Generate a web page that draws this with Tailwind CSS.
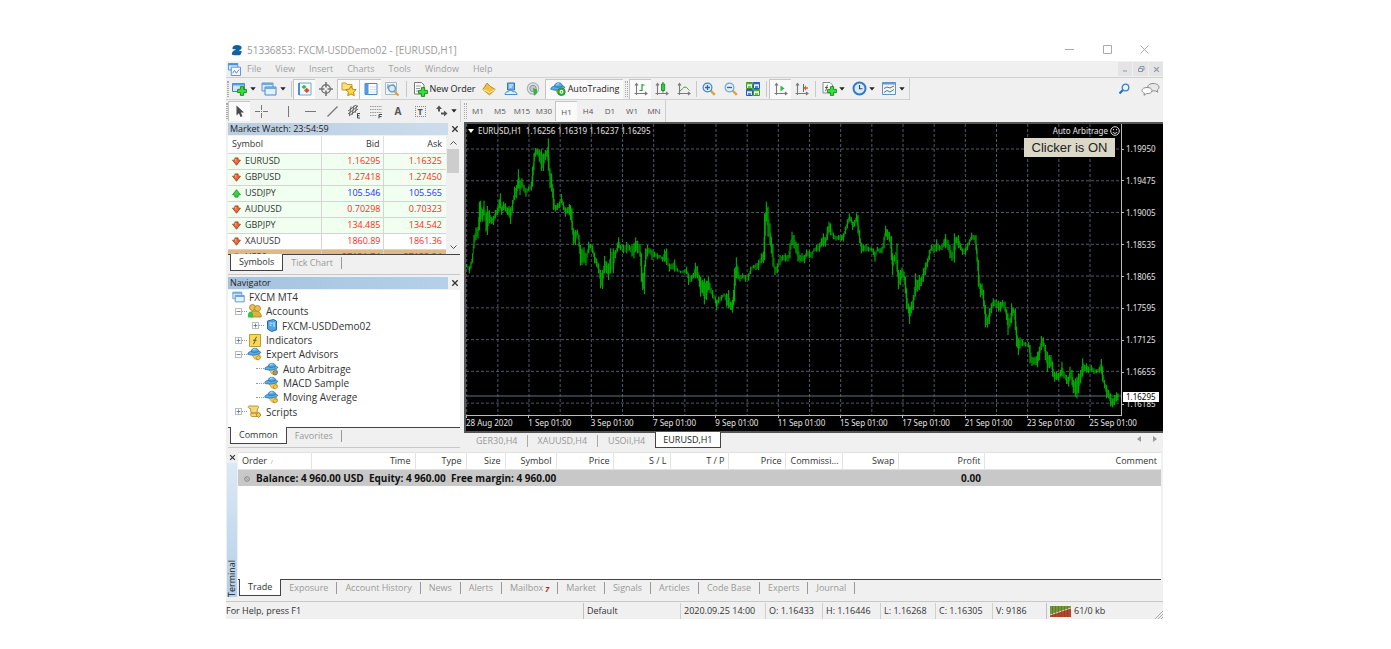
<!DOCTYPE html>
<html lang="en">
<head>
  <meta charset="UTF-8" />
  <meta name="viewport" content="width=device-width, initial-scale=1.0" />
  <title>51336853: FXCM-USDDemo02 - [EURUSD,H1]</title>
  <script src="https://cdn.jsdelivr.net/npm/@tailwindcss/browser@4"></script>
</head>
<body class="bg-white font-['Open_Sans','Noto_Sans',sans-serif] text-[9px] leading-[14px] text-[#333]">

  <!-- Shared icons -->
  <svg class="hidden" xmlns="http://www.w3.org/2000/svg">
    <symbol id="i-plus" viewBox="0 0 10 10"><path d="M3.4 .6h3.2v2.8h2.8v3.2H6.6v2.8H3.4V6.6H.6V3.4h2.8z" fill="#3ddc3d" stroke="#0b8a12" stroke-width=".9"/></symbol>
    <symbol id="i-caret" viewBox="0 0 6 4"><path d="M.3 .3h5.4L3 3.6z" fill="#222"/></symbol>
    <symbol id="i-down" viewBox="0 0 10 10"><path d="M3.2 1h3.6v2.5h2.6L5 9.2.6 3.5h2.6z" fill="#e8653a" stroke="#a8391a" stroke-width=".9"/><path d="M4.2 2v3" stroke="#ffc4a8"/></symbol>
    <symbol id="i-up" viewBox="0 0 10 10"><path d="M3.2 9h3.6V6.5h2.6L5 .8.6 6.5h2.6z" fill="#3fd04a" stroke="#158a22" stroke-width=".9"/></symbol>
    <symbol id="i-x" viewBox="0 0 8 8"><path d="M1.3 1.3l5.4 5.4M6.7 1.3L1.3 6.7" stroke="currentColor" stroke-width="1.3"/></symbol>
    <symbol id="i-advisor" viewBox="0 0 16 14"><path d="M7 6l6 1 1.5 3-3 3.5L8 12 5.5 8z" fill="#f3cf55" stroke="#b98a1e" stroke-width=".7"/><path d="M.8 7.2C1 5 3 4.400 4.400 4.300 4.600 2 6.500.8 8.600.8c2.200 0 3.700 1.400 3.800 3.300 1.300 0 2.300.5 2.300 1.500C11 8.500 5 8.800.8 7.200z" fill="#58aee6" stroke="#226fae" stroke-width=".8"/><path d="M4.500 4.400c2 1.100 5.500.9 7.800-.2" fill="none" stroke="#1f5f9a" stroke-width=".8"/><path d="M6.500 2.700c.8-.8 1.800-1 2.600-.9" stroke="#d5f0ff" fill="none"/></symbol>
    <symbol id="i-dot" viewBox="0 0 6 6"><path d="M3 .4L5.600 3 3 5.600.4 3z" fill="#f2c94a" stroke="#a97e17" stroke-width=".8"/></symbol>
    <symbol id="i-minus-box" viewBox="0 0 9 9"><path d="M.5.5h8v8h-8z" fill="#fff" stroke="#9a9a9a"/><path d="M2 4.500h5" stroke="#3a6ea8"/></symbol>
    <symbol id="i-plus-box" viewBox="0 0 9 9"><path d="M.5.5h8v8h-8z" fill="#fff" stroke="#9a9a9a"/><path d="M2 4.500h5M4.500 2v5" stroke="#3a6ea8"/></symbol>
    <symbol id="i-axes" viewBox="0 0 14 14"><path d="M2.500 13V2M.5 11.500h12M1 3.500L2.500 1.500 4 3.500M11 10l2 1.500-2 1.500" fill="none" stroke="#7b7b7b" stroke-width="1.100"/></symbol>
    <symbol id="i-windows" viewBox="0 0 16 14"><path d="M1 1h11v8H1z" fill="#d9ecfb" stroke="#5a95cf"/><path d="M1 1h11v2H1z" fill="#6aa8e0"/><path d="M4 5h11v8H4z" fill="#e2f1fd" stroke="#4a86c4"/><path d="M4 5h11v2H4z" fill="#6aa8e0"/></symbol>
  </svg>

  <div class="pt-[38px] pr-[228px] pl-[226px]">
    <!-- Title bar -->
    <header class="flex h-[23px] items-center bg-white text-[#9a9a9a]">
      <svg class="ml-[5px] h-3 w-3" viewBox="0 0 12 12"><path d="M1.500 3.800C2 1.800 3.500 1 6 1c2.800 0 4.600 1 4.600 2.800 0 1.500-1.300 2.400-3 3.200h3.200L10 9.700C9.500 11 8.800 11.300 7.500 11.300H3C1.300 11.300.6 10.300.9 9c.5-2 2.800-2.700 4.300-3.700H2.500C1.700 5.300 1.300 4.800 1.500 3.800z" fill="#12609f"/></svg>
      <h1 class="ml-1 text-[10px] leading-4">51336853: FXCM-USDDemo02 - [EURUSD,H1]</h1>
      <div class="ml-auto flex">
        <button aria-label="Minimize" class="flex h-5 w-[38px] items-center justify-center"><svg class="h-[9px] w-[9px]" viewBox="0 0 9 9"><path d="M0 4.500h9" stroke="#aaa"/></svg></button>
        <button aria-label="Maximize" class="flex h-5 w-[38px] items-center justify-center"><svg class="h-[9px] w-[9px]" viewBox="0 0 9 9"><path d="M.5.5h8v8h-8z" fill="none" stroke="#aaa"/></svg></button>
        <button aria-label="Close" class="flex h-5 w-[37px] items-center justify-center"><svg class="h-[9px] w-[9px]" viewBox="0 0 9 9"><path d="M.5.5l8 8M8.500.5l-8 8" stroke="#aaa"/></svg></button>
      </div>
    </header>

    <!-- Menu -->
    <nav class="flex h-[17px] items-center border-b border-[#d0d0d0] bg-[#f0f0f0] text-[#a0a0a0]">
      <svg class="mx-[2px] h-[13px] w-[13px]" viewBox="0 0 14 14"><path d="M.5.5h10v7H.5z" fill="#d9ecfb" stroke="#4a90d6"/><path d="M.5.5h10v2H.5z" fill="#4a90d6"/><path d="M3.500 4.500h10v9h-10z" fill="#f4faff" stroke="#4a90d6"/><path d="M5 11l2-3 2 3 3-4" fill="none" stroke="#6f74d8"/></svg>
      <button class="pr-[7px] pl-1">File</button>
      <button class="px-[7px]">View</button>
      <button class="px-[7px]">Insert</button>
      <button class="px-[7px]">Charts</button>
      <button class="px-[7px]">Tools</button>
      <button class="px-[7px]">Window</button>
      <button class="px-[7px]">Help</button>
      <div class="ml-auto flex gap-px text-[#8a98a6]">
        <button aria-label="Minimize chart" class="flex h-[14px] w-[14px] items-center justify-center bg-[#e4e4e4]"><svg class="h-2 w-2" viewBox="0 0 8 8"><path d="M2 6h4" stroke="currentColor"/></svg></button>
        <button aria-label="Restore chart" class="flex h-[14px] w-[15px] items-center justify-center bg-[#e4e4e4]"><svg class="h-2 w-2" viewBox="0 0 8 8"><path d="M1.500 3.500h4v3h-4zM3 3V1.500h4v3.500H6" fill="none" stroke="currentColor"/></svg></button>
        <button aria-label="Close chart" class="flex h-[14px] w-[14px] items-center justify-center bg-[#e4e4e4]"><svg class="h-[7px] w-[7px]"><use href="#i-x"/></svg></button>
      </div>
    </nav>

    <!-- Standard toolbar -->
    <div class="flex h-[22px] items-stretch bg-[#f0f0f0]">
      <div class="flex items-center border-r border-b border-[#d0d0d0]">
        <span class="mx-px h-4 w-[2px] border-x border-dotted border-[#aaa]"></span>
        <button aria-label="New chart" class="flex w-[30px] items-center gap-[3px] pl-px"><svg class="h-4 w-4" viewBox="0 0 16 16"><path d="M1.500 2.500h12v8h-12z" fill="#cfe6f9" stroke="#3f83c6"/><path d="M1.500 2.500h12v2h-12z" fill="#5a9edb"/><use href="#i-plus" x="6" y="5" width="10" height="10"/></svg><svg class="h-1 w-[6px]"><use href="#i-caret"/></svg></button>
        <button aria-label="Profiles" class="flex w-[30px] items-center gap-[3px] pl-px"><svg class="h-[14px] w-4"><use href="#i-windows"/></svg><svg class="h-1 w-[6px]"><use href="#i-caret"/></svg></button>
        <span class="mx-px h-4 w-px bg-[#c8c8c8]"></span>
        <button aria-label="Market Watch" class="flex h-5 w-[22px] items-center justify-center border-t border-l border-[#c4c4c4] bg-[#fafafa]"><svg class="h-[14px] w-[14px]" viewBox="0 0 14 14"><path d="M1 1h12v12H1z" fill="#f2f9ff" stroke="#6aa8dc"/><path d="M1 1v12" stroke="#4a90d0" stroke-width="2"/><path d="M3.500 5L6 2.800 8.500 5 6 7.200z" fill="#3bbf3b"/><path d="M6 8.500l2.800-2.800 2.800 2.800L8.800 11z" fill="#e1492c"/></svg></button>
        <button aria-label="Data Window" class="flex h-5 w-[22px] items-center justify-center"><svg class="h-[14px] w-[14px]" viewBox="0 0 14 14"><circle cx="7" cy="7" r="4.300" fill="none" stroke="#777" stroke-width="1.400"/><path d="M7 0v5.500M7 8.500V14M0 7h5.500M8.500 7H14" stroke="#777" stroke-width="1.600"/></svg></button>
        <button aria-label="Navigator" class="flex h-5 w-[22px] items-center justify-center border-t border-l border-[#c4c4c4] bg-[#fafafa]"><svg class="h-4 w-4" viewBox="0 0 16 16"><path d="M1 2h4l1 1.500h5V9H1z" fill="#fbe27a" stroke="#c99a2c"/><path d="M10 5l1.600 3.200 3.600.4-2.600 2.500.7 3.600L10 13l-3.300 1.700.7-3.600L4.800 8.600l3.600-.4z" fill="#fbd63c" stroke="#a9821a" stroke-width=".9"/></svg></button>
        <button aria-label="Terminal" class="flex h-5 w-[22px] items-center justify-center border-t border-l border-[#c4c4c4] bg-[#fafafa]"><svg class="h-[14px] w-[14px]" viewBox="0 0 14 14"><path d="M1 1.500h12v11H1z" fill="#fdfeff" stroke="#4a86c4"/><path d="M1 1.500h3.500v11H1z" fill="#4f9ada"/><path d="M6 5h6M6 7.500h6M6 10h6" stroke="#cfe2f2"/></svg></button>
        <button aria-label="Strategy Tester" class="flex h-5 w-[22px] items-center justify-center"><svg class="h-4 w-4" viewBox="0 0 16 16"><path d="M1.500 1.500h11v12h-11z" fill="#eef4fa" stroke="#a5b8ca"/><path d="M3 6h2M4 3v5M9 3v3" stroke="#6f93bb"/><circle cx="8" cy="7.500" r="3.400" fill="#d5ebfb" stroke="#5f94c4" stroke-width="1.200"/><path d="M10.500 10.500l4 4" stroke="#d9a33a" stroke-width="2.200"/></svg></button>
        <span class="mx-[3px] h-4 w-px bg-[#c8c8c8]"></span>
        <button class="flex h-5 w-[68px] items-center justify-center gap-px whitespace-nowrap text-[#222]"><svg class="h-4 w-4 shrink-0" viewBox="0 0 16 16"><path d="M2.500 1.500h7l2.500 2.500v9h-9.500z" fill="#fff" stroke="#777"/><path d="M4 5h5M4 7.500h4M4 10h3" stroke="#999"/><use href="#i-plus" x="6" y="6" width="10" height="10"/></svg>New Order</button>
        <button aria-label="MetaEditor" class="flex h-5 w-[22px] items-center justify-center"><svg class="h-[14px] w-[14px]" viewBox="0 0 14 14"><path d="M.8 7.500L5 1.200l3.500 3.300 4.800 3-5.800 5.300z" fill="#f0c040" stroke="#a8801f" stroke-width=".9"/><path d="M.8 7.500l6.700 3 5.800-3" fill="none" stroke="#fff0b0"/></svg></button>
        <button aria-label="Virtual hosting" class="flex h-5 w-[22px] items-center justify-center"><svg class="h-[14px] w-[14px]" viewBox="0 0 14 14"><path d="M3.500 1h7v7h-7z" fill="#6cb4ea" stroke="#2f78b8"/><path d="M5 3h4M5 5h3" stroke="#e8f6ff"/><path d="M1 12.500c0-2 1.500-3 3-2.800.8-1.700 4-1.700 5 0 2.500-.5 4 .8 4 2.800z" fill="#dcecf8" stroke="#4d8dc4"/></svg></button>
        <button aria-label="Signals" class="flex h-5 w-[22px] items-center justify-center"><svg class="h-[14px] w-[14px]" viewBox="0 0 14 14"><circle cx="7" cy="6.500" r="5.700" fill="#e4e8eb" stroke="#a9b2ba" stroke-width="1.200"/><circle cx="7" cy="6.500" r="3.300" fill="#c0c8ce" stroke="#8c97a1"/><path d="M7 6l4 1.500v2.500c0 2-1.500 3-3 3.700z" fill="#3fae3f"/></svg></button>
        <button class="ml-px flex h-5 w-[78px] items-center justify-center gap-[2px] border-t border-l border-[#c4c4c4] bg-[#fafafa] text-[#222]"><svg class="h-[14px] w-4 shrink-0" viewBox="0 0 16 14"><use href="#i-advisor" width="16" height="14"/><circle cx="11.500" cy="9.800" r="3.800" fill="#2fae36" stroke="#14801d" stroke-width=".6"/><circle cx="11.500" cy="9.800" r="1.400" fill="none" stroke="#fff" stroke-width="1.100"/></svg>AutoTrading</button>
        <span class="mr-px ml-[2px] h-4 w-[3px] border-x border-dotted border-[#aaa]"></span>
        <button aria-label="Bar chart" class="flex h-5 w-[22px] items-center justify-center border-t border-l border-[#c4c4c4] bg-[#fafafa]"><svg class="h-[14px] w-[14px]" viewBox="0 0 14 14"><use href="#i-axes" width="14" height="14"/><path d="M8 2v7M8 3h2.500M8 8.500H5.500" stroke="#269a3b" stroke-width="1.200"/></svg></button>
        <button aria-label="Candlesticks" class="flex h-5 w-[22px] items-center justify-center"><svg class="h-[14px] w-[14px]" viewBox="0 0 14 14"><use href="#i-axes" width="14" height="14"/><path d="M8 0v10.500" stroke="#167f24"/><path d="M6.500 2h3.200v6.500H6.500z" fill="#2fcb45" stroke="#167f24" stroke-width=".8"/></svg></button>
        <button aria-label="Line chart" class="flex h-5 w-[22px] items-center justify-center"><svg class="h-[14px] w-[14px]" viewBox="0 0 14 14"><use href="#i-axes" width="14" height="14"/><path d="M3 9c2-1 3-4 5-4s2.500 2 4.500 3.500" fill="none" stroke="#3d9a4a"/></svg></button>
        <span class="mx-px h-4 w-px bg-[#c8c8c8]"></span>
        <button aria-label="Zoom in" class="flex h-5 w-[22px] items-center justify-center"><svg class="h-[14px] w-[14px]" viewBox="0 0 14 14"><path d="M8.500 8.500l4.300 4.300" stroke="#dba634" stroke-width="2.400"/><circle cx="5.500" cy="5.500" r="4.400" fill="#dff0fd" stroke="#3c86cc" stroke-width="1.200"/><path d="M3 5.500h5M5.500 3v5" stroke="#2468a8" stroke-width="1.300"/></svg></button>
        <button aria-label="Zoom out" class="flex h-5 w-[22px] items-center justify-center"><svg class="h-[14px] w-[14px]" viewBox="0 0 14 14"><path d="M8.500 8.500l4.300 4.300" stroke="#dba634" stroke-width="2.400"/><circle cx="5.500" cy="5.500" r="4.400" fill="#dff0fd" stroke="#6ba4da" stroke-width="1.200"/><path d="M3 5.500h5" stroke="#2468a8" stroke-width="1.300"/></svg></button>
        <button aria-label="Tile windows" class="flex h-5 w-[22px] items-center justify-center"><svg class="h-[14px] w-[14px]" viewBox="0 0 14 14"><path d="M.5.500h6v6h-6zM7.500 7.500h6v6h-6z" fill="#e8fbe0" stroke="#3a9a22"/><path d="M7.500.5h6v6h-6zM.5 7.500h6v6h-6z" fill="#e2edfc" stroke="#2756b8"/><path d="M0 1.500h7M7 8.500h7M2 5h3M9 12h3" stroke="#45b32a" stroke-width="1.600"/><path d="M7 1.500h7M0 8.500h7M9 5h3M2 12h3" stroke="#2f64cc" stroke-width="1.600"/></svg></button>
        <span class="mx-[2px] h-4 w-px bg-[#c8c8c8]"></span>
        <button aria-label="Auto scroll" class="flex h-5 w-[22px] items-center justify-center border-t border-l border-[#c4c4c4] bg-[#fafafa]"><svg class="h-[14px] w-[14px]" viewBox="0 0 14 14"><use href="#i-axes" width="14" height="14"/><path d="M6.500 3.500v6L10.500 6.500z" fill="#2fb845"/></svg></button>
        <button aria-label="Chart shift" class="flex h-5 w-[22px] items-center justify-center"><svg class="h-[14px] w-[14px]" viewBox="0 0 14 14"><use href="#i-axes" width="14" height="14"/><path d="M8.500 2v8" stroke="#44709c"/><path d="M13 6h-3" stroke="#d95a2b" stroke-width="1.400"/><path d="M11 3.500v5L8.500 6z" fill="#d95a2b"/></svg></button>
        <span class="mx-[2px] h-4 w-px bg-[#c8c8c8]"></span>
        <button aria-label="Indicators" class="flex w-[30px] items-center justify-center gap-[2px]"><svg class="h-4 w-4" viewBox="0 0 16 16"><path d="M2 1.500h7l2.500 2.500v8H2z" fill="#fff" stroke="#888"/><path d="M7 4c-2 0-1 6-3 6M4 6.500h3" fill="none" stroke="#555"/><use href="#i-plus" x="6" y="5" width="10" height="10"/></svg><svg class="h-1 w-[6px]"><use href="#i-caret"/></svg></button>
        <button aria-label="Periods" class="flex w-[30px] items-center justify-center gap-[2px]"><svg class="h-[15px] w-[15px]" viewBox="0 0 15 15"><circle cx="7.500" cy="7.500" r="6" fill="#d8ebfa" stroke="#2f7cc4" stroke-width="2"/><path d="M7.500 4v3.800h3" fill="none" stroke="#345" stroke-width="1.100"/></svg><svg class="h-1 w-[6px]"><use href="#i-caret"/></svg></button>
        <button aria-label="Templates" class="flex w-[31px] items-center justify-center gap-[3px]"><svg class="h-[13px] w-[14px]" viewBox="0 0 14 13"><path d="M.5.5h13v12H.5z" fill="#eef6fd" stroke="#5c93c4"/><path d="M.5 1.500h13" stroke="#5b9bd6" stroke-width="2"/><path d="M2 6.500l3-1.500 3 1 4-2" fill="none" stroke="#b5523a"/><path d="M2 10.500l3-2 3 1.500 4-2.500" fill="none" stroke="#3f8f4a"/></svg><svg class="h-1 w-[6px]"><use href="#i-caret"/></svg></button>
      </div>
      <div class="ml-auto flex items-center gap-[11px] pr-[3px]">
        <button aria-label="Search"><svg class="h-3 w-3" viewBox="0 0 12 12"><path d="M5.200 6.800L1.500 10.500" stroke="#2c6fb5" stroke-width="2.200"/><circle cx="7.500" cy="4.500" r="3.300" fill="#e6f2fc" stroke="#3c82c6" stroke-width="1.300"/></svg></button>
        <button aria-label="Chat"><svg class="h-[14px] w-[19px]" viewBox="0 0 19 14"><path d="M12 1.500c3.500 0 6 1.500 6 3.700 0 1.300-.8 2.200-1.700 2.800l.5 2.200-2.600-1.400c-4 .6-7.500-.8-7.500-3.600C6.700 3 9 1.500 12 1.500z" fill="#e8e8e8" stroke="#8c8c8c"/><path d="M6 5.500c3 0 5 1.200 5 3.100 0 2.200-2.500 3.300-5.500 3l-2.500 1.700.4-2.300C2 10.500 1 9.700 1 8.600c0-1.900 2.200-3.100 5-3.100z" fill="#fff" stroke="#8c8c8c"/></svg></button>
      </div>
    </div>

    <!-- Line studies and timeframes -->
    <div class="flex h-[22px] bg-[#f0f0f0] text-[8px] text-[#555]">
      <div class="flex w-[235px] items-center border-r border-[#d0d0d0]">
        <span class="h-4 w-[2px] border-x border-dotted border-[#aaa]"></span>
        <button aria-label="Cursor" class="flex h-5 w-[22px] items-center justify-center border-t border-l border-[#c4c4c4] bg-[#fafafa]"><svg class="h-[13px] w-[10px]" viewBox="0 0 10 13"><path d="M1.500.5v10l2.400-2.300L5.600 12l1.900-.8-1.700-3.700H9z" fill="#4a4a4a"/></svg></button>
        <button aria-label="Crosshair" class="mr-[5px] flex h-5 w-[22px] items-center justify-center"><svg class="h-[13px] w-[13px]" viewBox="0 0 13 13"><path d="M6.500 0v5M6.500 8v5M0 6.500h5M8 6.500h5M6 6.500h1" stroke="#777"/></svg></button>
        <button aria-label="Vertical line" class="flex h-5 w-[22px] items-center justify-center"><svg class="h-[11px] w-[11px]" viewBox="0 0 11 11"><path d="M5.500 0v11" stroke="#777"/></svg></button>
        <button aria-label="Horizontal line" class="flex h-5 w-[22px] items-center justify-center"><svg class="h-[11px] w-[11px]" viewBox="0 0 11 11"><path d="M0 5.500h11" stroke="#777"/></svg></button>
        <button aria-label="Trendline" class="flex h-5 w-[22px] items-center justify-center"><svg class="h-[11px] w-[11px]" viewBox="0 0 11 11"><path d="M.5 10.500l10-10" stroke="#777" stroke-width="1.200"/></svg></button>
        <button aria-label="Equidistant channel" class="flex h-5 w-[22px] items-center justify-center"><svg class="h-[15px] w-[14px]" viewBox="0 0 14 15"><path d="M1 7l8-6M1 10l10-8M2 12l9-7M4 2.500L2.500 11M7 1.500L5 11M10 1L8 9" stroke="#666" fill="none"/><path d="M13 9.500h-2.500v4.500H13M10.500 11.700h2" fill="none" stroke="#444"/></svg></button>
        <button aria-label="Fibonacci retracement" class="flex h-5 w-[22px] items-center justify-center"><svg class="h-[15px] w-[14px]" viewBox="0 0 14 15"><path d="M1 2.500h12M1 5.500h12M1 8.500h12M1 11.500h7" stroke="#999" stroke-dasharray="1.500 .8"/><path d="M10 14.500v-4h3M10 12.500h2.500" fill="none" stroke="#444"/></svg></button>
        <button class="h-5 w-[22px] text-center text-[10px] font-bold text-[#555]">A</button>
        <button class="flex h-5 w-[22px] items-center justify-center"><span class="h-[11px] w-[11px] border border-dotted border-[#888] text-center text-[9px] leading-[10px] font-bold text-[#555]">T</span></button>
        <button aria-label="Arrows" class="flex h-5 w-[29px] items-center justify-center gap-[3px]"><svg class="h-3 w-[13px]" viewBox="0 0 13 12"><path d="M4 .5L7 4H5v2.500H3V4H1z" fill="#555"/><path d="M6 7.500h3V5.500l3.500 3L9 11.500V9.500H6z" fill="#555"/></svg><svg class="h-1 w-[6px]"><use href="#i-caret"/></svg></button>
      </div>
      <div class="ml-px flex items-center border-r border-[#d0d0d0]">
        <span class="ml-[2px] h-4 w-[3px] border-x border-dotted border-[#aaa]"></span>
        <button class="h-5 w-[22px]">M1</button>
        <button class="h-5 w-[22px]">M5</button>
        <button class="h-5 w-[22px]">M15</button>
        <button class="h-5 w-[22px]">M30</button>
        <button class="h-5 w-[22px] border-t border-l border-[#c4c4c4] bg-[#fafafa]">H1</button>
        <button class="h-5 w-[22px]">H4</button>
        <button class="h-5 w-[22px]">D1</button>
        <button class="h-5 w-[22px]">W1</button>
        <button class="h-5 w-[22px]">MN</button>
      </div>
    </div>

    <main class="flex bg-[#f0f0f0]">
      <div class="w-[238px] shrink-0 pr-1 pl-[2px]">
        <!-- Market Watch -->
        <section class="border-b border-[#c8c8c8] pb-[3px]">
          <div class="flex h-[14px] items-center justify-between pr-px">
            <h2 class="h-3 w-[220px] bg-gradient-to-r from-[#b8cde0] to-[#ccdcec] pl-[2px] leading-3 text-[#222]">Market Watch: 23:54:59</h2>
            <button aria-label="Close Market Watch"><svg class="h-2 w-2"><use href="#i-x"/></svg></button>
          </div>
          <div class="flex h-[119px] overflow-hidden border-b border-[#444] bg-white">
            <div class="flex-1">
              <table class="w-full table-fixed border-collapse text-right">
                <thead>
                  <tr class="h-[17px] border-b border-[#d4d4d4]">
                    <th class="w-[93px] border-r border-[#e0e0e0] pl-1 text-left font-normal">Symbol</th>
                    <th class="w-[62px] border-r border-[#e0e0e0] pr-[3px] font-normal">Bid</th>
                    <th class="pr-1 font-normal">Ask</th>
                  </tr>
                </thead>
                <tbody id="quotes"></tbody>
              </table>
            </div>
            <div class="flex w-[14px] flex-col items-center justify-between bg-[#f0f0f0] pt-1 pb-1">
              <svg class="h-[5px] w-[7px]" viewBox="0 0 7 5"><path d="M.5 4.500l3-3 3 3" fill="none" stroke="#555"/></svg>
              <span class="mt-1 mb-auto h-6 w-3 bg-[#cdcdcd]"></span>
              <svg class="h-[5px] w-[7px]" viewBox="0 0 7 5"><path d="M.5.5l3 3 3-3" fill="none" stroke="#555"/></svg>
            </div>
          </div>
          <div class="flex h-4 items-start pl-[2px]">
            <button class="-mt-px h-[17px] border border-t-0 border-[#444] bg-white px-2 leading-4">Symbols</button>
            <button class="my-[2px] h-3 border-r border-[#999] px-2 leading-3 text-[#999]">Tick Chart</button>
          </div>
        </section>

        <!-- Navigator -->
        <section class="border-b border-[#c8c8c8] pt-px pb-[3px]">
          <div class="flex h-[14px] items-center justify-between pr-px">
            <h2 class="h-3 w-[220px] bg-gradient-to-r from-[#a5c3de] to-[#b5d0e8] pl-[2px] leading-3 text-[#222]">Navigator</h2>
            <button aria-label="Close Navigator"><svg class="h-2 w-2"><use href="#i-x"/></svg></button>
          </div>
          <div class="border-b border-[#444] bg-white pb-[8px] text-[10px]">
            <ul class="grid h-[129px] grid-rows-9 pl-1">
              <li class="flex items-center gap-1"><svg class="h-3 w-[13px]"><use href="#i-windows"/></svg>FXCM MT4</li>
              <li class="flex items-center pl-[3px]"><svg class="h-[7px] w-[7px]"><use href="#i-minus-box"/></svg><span class="w-[5px] border-t border-dotted border-[#999]"></span><svg class="mr-1 h-[14px] w-[15px]" viewBox="0 0 15 14"><circle cx="5.500" cy="3.500" r="3" fill="#e9bf52" stroke="#a67c1c" stroke-width=".8"/><circle cx="10.500" cy="4.500" r="3" fill="#e9bf52" stroke="#a67c1c" stroke-width=".8"/><path d="M3 12c0-3 1-5 3.500-5s8 0 7.800 6H4z" fill="#e2b23c" stroke="#a67c1c" stroke-width=".8"/><path d="M1 13.500c-.3-4 .5-6 2.500-6s3 2 2.500 6z" fill="#32c83c"/></svg>Accounts</li>
              <li class="flex items-center pl-[20px]"><svg class="h-[7px] w-[7px]"><use href="#i-plus-box"/></svg><span class="w-[5px] border-t border-dotted border-[#999]"></span><svg class="mr-1 ml-[2px] h-[13px] w-3" viewBox="0 0 12 13"><path d="M1.500 2l6-1.500 3 1.500v9l-5 1.500-4-2.500z" fill="#4fa3e2" stroke="#2568a8"/><path d="M3.500 4l3 .5M3.500 6l2 .5M8 3v5" stroke="#d8eefc"/></svg>FXCM-USDDemo02</li>
              <li class="flex items-center pl-[3px]"><svg class="h-[7px] w-[7px]"><use href="#i-plus-box"/></svg><span class="w-[5px] border-t border-dotted border-[#999]"></span><svg class="mr-1 ml-px h-[13px] w-[14px]" viewBox="0 0 14 13"><path d="M1.500.5h11v12h-11z" fill="#f7d75e" stroke="#c19a2c"/><path d="M9 3c-2.500 0-1.500 7-4 7M5 6.300h3.500" fill="none" stroke="#6b5510"/></svg>Indicators</li>
              <li class="flex items-center pl-[3px]"><svg class="h-[7px] w-[7px]"><use href="#i-minus-box"/></svg><span class="w-[5px] border-t border-dotted border-[#999]"></span><svg class="mr-1 h-[14px] w-[15px]" viewBox="0 0 16 14"><use href="#i-advisor" width="16" height="14"/><use href="#i-dot" x="9" y="8" width="6" height="6"/></svg>Expert Advisors</li>
              <li class="flex items-center pl-[24px]"><span class="w-2 border-t border-dotted border-[#999]"></span><svg class="mr-1 h-[14px] w-[15px]" viewBox="0 0 16 14"><use href="#i-advisor" width="16" height="14"/><circle cx="12" cy="11" r="2.400" fill="#999" stroke="#666" stroke-width=".8"/></svg>Auto Arbitrage</li>
              <li class="flex items-center pl-[24px]"><span class="w-2 border-t border-dotted border-[#999]"></span><svg class="mr-1 h-[14px] w-[15px]" viewBox="0 0 16 14"><use href="#i-advisor" width="16" height="14"/><use href="#i-dot" x="9" y="8" width="6" height="6"/></svg>MACD Sample</li>
              <li class="flex items-center pl-[24px]"><span class="w-2 border-t border-dotted border-[#999]"></span><svg class="mr-1 h-[14px] w-[15px]" viewBox="0 0 16 14"><use href="#i-advisor" width="16" height="14"/><use href="#i-dot" x="9" y="8" width="6" height="6"/></svg>Moving Average</li>
              <li class="flex items-center pl-[3px]"><svg class="h-[7px] w-[7px]"><use href="#i-plus-box"/></svg><span class="w-[5px] border-t border-dotted border-[#999]"></span><svg class="mr-1 h-[13px] w-[15px]" viewBox="0 0 15 13"><path d="M2 1h8.500c1.500 0 1.500 2.500 0 2.500L10 8H4l-.5-4.500C.8 4 .8 1 2 1zM4 8h8c2 0 2 3.500 0 3.500H5C3.500 11.500 3.500 9 4 8z" fill="#f5d778" stroke="#b88f2c" stroke-width=".9"/><use href="#i-dot" x="8.500" y="7" width="6" height="6"/></svg>Scripts</li>
            </ul>
          </div>
          <div class="flex h-4 items-start pl-[2px]">
            <button class="-mt-px h-[17px] border border-t-0 border-[#444] bg-white px-2 leading-4">Common</button>
            <button class="my-[2px] h-3 border-r border-[#999] px-2 leading-3 text-[#999]">Favorites</button>
          </div>
        </section>
      </div>

      <!-- Chart -->
      <section class="flex min-w-0 flex-1 flex-col">
        <div class="relative flex flex-1 flex-col border-t-2 border-b border-l-2 border-[#555] bg-black font-['Noto_Sans','Open_Sans',sans-serif] text-[8px] leading-[10px] text-[#e4e4e4]">
          <div class="flex flex-1">
            <div class="relative flex-1 border-r border-b border-[#bbb]">
              <svg id="plot" class="absolute inset-0 h-full w-full" viewBox="0 0 1965 873" preserveAspectRatio="none"></svg>
            </div>
            <div id="prices" class="relative w-[41px] shrink-0"></div>
          </div>
          <div id="times" class="relative mr-[42px] h-[15px]"></div>
          <div class="absolute inset-x-0 top-[2px] flex items-center justify-between pr-[43px] pl-[2px]">
            <div class="flex items-center gap-1"><svg class="h-1 w-[6px]" viewBox="0 0 6 4"><path d="M0 0h6L3 4z" fill="#fff"/></svg><span class="whitespace-pre">EURUSD,H1  1.16256 1.16319 1.16237 1.16295</span></div>
            <div class="flex items-center gap-[2px]">Auto Arbitrage <svg class="h-[10px] w-[10px]" viewBox="0 0 10 10"><circle cx="5" cy="5" r="4.300" fill="none" stroke="#ddd"/><path d="M3.500 3v1.200M6.500 3v1.200M2.800 6c1 1.800 3.400 1.800 4.400 0" fill="none" stroke="#ddd"/></svg></div>
          </div>
          <button class="absolute top-[14px] right-[48px] h-[19px] w-[91px] bg-[#dcd8c8] font-['Liberation_Sans',Arial,sans-serif] text-[13px] leading-[19px] whitespace-nowrap text-[#222]">Clicker is ON</button>
        </div>
        <div class="flex h-4 shrink-0 items-start border-t border-[#555] text-[#999]">
          <button class="my-[2px] h-3 border-r border-[#aaa] pr-[9px] pl-3 leading-3">GER30,H4</button>
          <button class="my-[2px] h-3 border-r border-[#aaa] px-[10px] leading-3">XAUUSD,H4</button>
          <button class="my-[2px] h-3 px-[10px] leading-3">USOil,H4</button>
          <button class="-mt-px h-4 border border-t-0 border-[#444] bg-white px-[7px] leading-4 text-[#222]">EURUSD,H1</button>
          <div class="mt-[3px] ml-auto flex gap-3 pr-[6px]">
            <button aria-label="Previous tab"><svg class="h-[6px] w-1" viewBox="0 0 4 6"><path d="M4 0v6L0 3z" fill="#999"/></svg></button>
            <button aria-label="Next tab"><svg class="h-[6px] w-1" viewBox="0 0 4 6"><path d="M0 0v6l4-3z" fill="#999"/></svg></button>
          </div>
        </div>
      </section>
    </main>

    <!-- Terminal -->
    <section class="flex border-b border-[#c8c8c8] bg-[#f0f0f0] pt-[4px] pr-[2px] pb-1">
      <div class="flex w-3 shrink-0 flex-col items-center">
        <button aria-label="Close Terminal" class="mb-px flex h-[10px] items-center"><svg class="h-[7px] w-[7px]"><use href="#i-x"/></svg></button>
        <h2 class="w-[10px] flex-1 rotate-180 bg-gradient-to-t from-[#dce9f6] to-[#b4cfe8] text-left leading-[10px] text-[#222] [writing-mode:vertical-rl]">Terminal</h2>
      </div>
      <div class="min-w-0 flex-1">
        <div class="h-[128px] border-b border-[#444] bg-white">
          <table class="w-full table-fixed border-collapse text-right">
            <thead>
              <tr class="h-[17px] border-t border-b border-[#e0e0e0]">
                <th class="w-[73px] border-r border-[#e4e4e4] pl-1 text-left font-normal">Order <span class="text-[6px] text-[#999]">&nbsp;∕</span></th>
                <th class="w-[104px] border-r border-[#e4e4e4] pr-1 font-normal">Time</th>
                <th class="w-[51px] border-r border-[#e4e4e4] pr-1 font-normal">Type</th>
                <th class="w-[39px] border-r border-[#e4e4e4] pr-1 font-normal">Size</th>
                <th class="w-[51px] border-r border-[#e4e4e4] pr-1 font-normal">Symbol</th>
                <th class="w-[57px] border-r border-[#e4e4e4] pr-[3px] font-normal">Price</th>
                <th class="w-[57px] border-r border-[#e4e4e4] pr-[3px] font-normal">S / L</th>
                <th class="w-[58px] border-r border-[#e4e4e4] pr-[3px] font-normal">T / P</th>
                <th class="w-[57px] border-r border-[#e4e4e4] pr-[3px] font-normal">Price</th>
                <th class="w-[57px] border-r border-[#e4e4e4] pr-[3px] font-normal whitespace-nowrap">Commissi...</th>
                <th class="w-[56px] border-r border-[#e4e4e4] pr-[3px] font-normal">Swap</th>
                <th class="w-[86px] border-r border-[#e4e4e4] pr-[3px] font-normal">Profit</th>
                <th class="pr-1 font-normal">Comment</th>
              </tr>
            </thead>
            <tbody>
              <tr class="h-4 bg-[#c8c8c8] text-[10px] font-bold text-[#111]">
                <td colspan="11" class="pl-[6px] text-left whitespace-pre"><svg class="mr-[6px] inline h-[6px] w-[6px] align-middle" viewBox="0 0 6 6"><circle cx="3" cy="3" r="2.300" fill="none" stroke="#888"/><path d="M1 1l4 4" stroke="#888" stroke-width=".7"/></svg>Balance: 4 960.00 USD  Equity: 4 960.00  Free margin: 4 960.00</td>
                <td class="pr-[3px]">0.00</td>
                <td></td>
              </tr>
            </tbody>
          </table>
        </div>
        <div class="flex h-[17px] items-start pl-px text-[#999]">
          <button class="-mt-px h-[17px] border border-t-0 border-[#444] bg-white px-2 leading-4 text-[#333]">Trade</button>
          <button class="my-[2px] h-3 border-r border-[#999] px-2 leading-3">Exposure</button>
          <button class="my-[2px] h-3 border-r border-[#999] px-2 leading-3">Account History</button>
          <button class="my-[2px] h-3 border-r border-[#999] px-2 leading-3">News</button>
          <button class="my-[2px] h-3 border-r border-[#999] px-2 leading-3">Alerts</button>
          <button class="my-[2px] flex h-3 border-r border-[#999] px-2 leading-3">Mailbox<span class="pt-[3px] pl-[2px] text-[7px] leading-[10px] font-bold text-red-600 italic">7</span></button>
          <button class="my-[2px] h-3 border-r border-[#999] px-2 leading-3">Market</button>
          <button class="my-[2px] h-3 border-r border-[#999] px-2 leading-3">Signals</button>
          <button class="my-[2px] h-3 border-r border-[#999] px-2 leading-3">Articles</button>
          <button class="my-[2px] h-3 border-r border-[#999] px-2 leading-3">Code Base</button>
          <button class="my-[2px] h-3 border-r border-[#999] px-2 leading-3">Experts</button>
          <button class="my-[2px] h-3 border-r border-[#999] px-2 leading-3">Journal</button>
        </div>
      </div>
    </section>

    <!-- Status bar -->
    <footer class="relative flex h-[17px] items-end bg-[#f0f0f0] leading-4">
      <span class="flex-1">For Help, press F1</span>
      <span class="w-[97px] border-l border-[#c0c0c0] pl-[3px]">Default</span>
      <span class="w-[85px] border-l border-[#d0d0d0] pl-[3px]">2020.09.25 14:00</span>
      <span class="w-[57px] border-l border-[#d0d0d0] pl-[3px]">O: 1.16433</span>
      <span class="w-[58px] border-l border-[#d0d0d0] pl-[3px]">H: 1.16446</span>
      <span class="w-[55px] border-l border-[#d0d0d0] pl-[3px]">L: 1.16268</span>
      <span class="w-[57px] border-l border-[#d0d0d0] pl-[3px]">C: 1.16305</span>
      <span class="w-[54px] border-l border-[#d0d0d0] pl-[3px]">V: 9186</span>
      <span class="flex w-[117px] items-center gap-[3px] border-l border-[#c0c0c0] pl-[3px]"><svg class="h-[11px] w-[21px]" viewBox="0 0 21 11"><path d="M0 0h21v11H0z" fill="#6f9a3a"/><path d="M0 9l21-7v9H0z" fill="#b8442c"/><path d="M0 9l21-7" stroke="#f0e8d8" stroke-width=".8"/><path d="M2.500 0v11M5.500 0v11M8.500 0v11M11.500 0v11M14.500 0v11M17.500 0v11" stroke="#5a4420" stroke-opacity=".5" stroke-width=".8"/></svg>61/0 kb</span>
      <svg class="absolute right-0 bottom-0 h-2 w-2" viewBox="0 0 8 8"><path d="M0 8l8-8M3 8l5-5M6 8l2-2" stroke="#aaa"/></svg>
    </footer>
  </div>

  <script>
    // Market Watch rows
    const quotes = [
      ["EURUSD", "1.16295", "1.16325", "down"],
      ["GBPUSD", "1.27418", "1.27450", "down"],
      ["USDJPY", "105.546", "105.565", "up"],
      ["AUDUSD", "0.70298", "0.70323", "down"],
      ["GBPJPY", "134.485", "134.542", "down"],
      ["XAUUSD", "1860.89", "1861.36", "down"],
      ["US30", "27131.74", "27133.24", "down"]
    ];
    document.getElementById("quotes").innerHTML = quotes.map(([symbol, bid, ask, dir], i) => {
      const color = dir === "up" ? "text-[#2a2cff]" : "text-[#ff2a18]";
      const bg = i === 6 ? "bg-[#deb887]" : i === 5 ? "bg-white" : "bg-[#f0fff0]";
      return `<tr class="h-4 border-b border-[#d4d4d4] ${bg}">
        <td class="border-r border-[#d4d4d4] pl-1 text-left"><span class="flex items-center gap-1"><svg class="h-[9px] w-[9px]"><use href="#i-${dir}"/></svg>${symbol}</span></td>
        <td class="border-r border-[#d4d4d4] pr-[2px] ${color}">${bid}</td>
        <td class="pr-1 ${color}">${ask}</td>
      </tr>`;
    }).join("");

    // H1 bars: x, high, low, in plot units
    const parts = [
      { dx: -18, dy: -12, bars: [
        20,432,442, 28,440,460, 33,425,445, 38,400,428, 42,345,385, 48,322,360, 54,320,355, 58,245,330, 62,242,305, 68,268,305, 72,242,285, 78,280,335, 82,258,345, 88,270,310, 94,290,312, 100,288,315, 106,270,296, 112,262,285, 117,240,275, 121,220,265, 125,262,285, 130,245,270, 136,250,275, 142,262,285, 147,258,290, 152,262,312, 158,240,275, 164,200,240, 170,195,235, 175,148,205, 180,180,225, 186,175,200, 192,195,215, 198,205,230, 206,200,212, 214,185,212, 218,140,200, 222,100,150, 226,84,110, 232,86,105, 238,88,125, 244,88,153, 250,100,153, 256,90,120, 261,90,110, 265,55,152, 270,145,205, 275,160,215, 280,205,270, 286,255,275, 292,250,270, 298,245,265, 304,222,250, 310,245,270, 316,262,290, 322,262,280, 328,252,285, 332,255,300, 336,265,330, 340,325,375, 346,330,375, 352,328,345, 357,345,380, 361,375,437, 366,385,435, 372,382,430, 378,400,437, 386,365,400, 392,372,385, 398,376,400, 404,398,430, 410,415,440, 416,430,460, 422,450,505, 428,450,507, 434,408,460, 440,425,460, 446,430,480, 452,385,460, 460,385,460, 466,390,415, 472,370,395, 476,352,385, 482,375,390, 490,375,400, 500,366,400, 508,375,392, 516,375,410, 522,370,415, 527,352,395, 533,362,400, 540,372,410, 544,400,485, 548,460,510, 553,435,523, 557,385,440, 563,375,410, 570,385,400, 576,388,420, 584,395,412, 592,400,418, 600,405,415, 608,410,425, 614,388,425, 620,385,435, 628,430,455, 636,430,448, 644,418,455, 652,445,455, 662,452,460, 672,450,460, 680,440,462, 686,460,495, 694,465,485, 700,458,475, 706,428,475, 712,438,475, 718,465,500, 722,470,530, 728,480,520, 733,475,553, 740,482,540, 745,470,510, 750,490,520, 758,510,535, 766,530,550, 770,540,570, 776,530,550, 784,525,542, 792,520,530, 800,520,560, 806,510,565, 812,545,570, 817,540,578, 821,510,555, 824,445,545, 829,412,475, 834,440,478, 840,465,485, 848,460,475, 856,465,485, 866,460,482, 872,440,462, 880,435,445, 888,430,450, 896,420,450, 904,400,430, 910,395,430, 914,280,420, 919,245,305, 924,260,350, 930,310,375, 934,350,400, 939,375,440, 945,440,465, 952,430,460, 960,405,435, 968,405,422, 976,400,425, 984,405,425, 990,370,415, 996,335,375, 1002,345,385, 1008,365,400, 1014,370,425] },
      { dx: 942, dy: 168, bars: [
        60,225,248, 66,220,245, 74,225,250, 80,208,230, 88,212,235, 96,215,235, 102,205,215, 110,195,215, 118,190,215, 124,175,200, 130,160,200, 136,172,200, 142,140,180, 147,125,158, 152,130,165, 160,158,178, 168,168,182, 176,165,180, 184,165,182, 190,160,185, 196,140,162, 202,118,145, 208,100,125, 214,112,128, 218,125,150, 224,120,140, 230,100,125, 234,105,160, 239,150,190, 244,188,220, 250,195,215, 258,192,215, 266,200,215, 274,202,212, 280,205,225, 285,215,245, 292,200,215, 300,205,220, 306,200,220, 312,170,205, 317,137,170, 322,148,180, 328,155,185, 334,168,240, 338,220,285, 344,225,245, 351,190,275, 355,270,328, 361,270,315, 366,262,295, 372,275,300, 376,290,340, 380,325,388, 386,370,400, 389,380,432, 394,365,400, 400,345,390, 406,280,350, 412,300,335, 418,285,330, 424,290,318, 430,265,305, 436,248,285, 442,235,262, 448,210,240, 454,195,212, 462,195,220, 470,178,215, 478,195,212, 486,195,210, 492,178,200, 497,162,205, 504,180,210, 510,195,235, 516,215,243, 523,160,248, 529,170,190, 535,165,205, 542,190,210, 548,205,225, 556,202,225, 562,190,210, 568,178,195, 575,158,180, 582,165,180, 588,165,210, 591,205,245, 595,240,320, 601,310,352, 606,310,345, 611,330,380, 616,375,442, 622,412,443, 628,385,432, 634,370,400, 640,355,380, 648,358,385, 656,362,395, 662,365,395, 668,360,380, 675,365,395, 680,388,420, 684,400,465, 690,415,440, 695,370,430, 700,385,400, 706,385,450, 710,440,500, 715,475,525, 720,472,505, 728,480,498, 736,486,500, 746,486,502, 750,495,550, 756,530,558, 762,530,555, 768,530,555, 773,515,562, 778,500,540, 784,468,510, 790,472,500, 796,495,540, 802,515,575, 808,525,565, 813,525,560, 818,545,590, 824,575,605, 830,575,600, 836,578,602, 842,570,590, 846,545,590, 852,575,595, 860,585,612, 866,590,620, 870,560,595, 876,570,615, 880,600,640, 886,595,650, 891,590,655, 896,580,640, 902,570,610, 908,535,590, 914,555,575, 920,550,578, 926,560,580, 934,555,575, 942,565,582, 950,568,580, 958,560,578, 964,537,580, 968,560,605, 974,600,625, 980,615,655, 986,630,655, 992,640,680, 998,655,682, 1004,645,675, 1010,637,665, 1014,640,662] }
    ];
    const bars = [];
    parts.forEach(p => {
      for (let i = 0; i < p.bars.length; i += 3) {
        bars.push([p.bars[i] + p.dx, p.bars[i + 1] + p.dy, p.bars[i + 2] + p.dy]);
      }
    });

    const firstY = 75, stepY = 95.3, stepX = 93.5;
    let grid = "", bright = "", dark = "";
    for (let i = 0; i < 9; i++) grid += `M0 ${firstY + i * stepY}H1965`;
    for (let i = 0; i < 21; i++) grid += `M${2 + i * stepX} 0V873`;
    bars.forEach(([x, hi, lo], i) => {
      bright += `M${x} ${hi}V${lo}`;
      const next = bars[i + 1];
      if (next) {
        const a = (hi + next[1]) / 2, b = (lo + next[2]) / 2;
        dark += `M${(x + next[0]) / 2} ${a + (b - a) * 0.15}V${b - (b - a) * 0.15}`;
      }
    });
    document.getElementById("plot").innerHTML = `
      <path d="${grid}" stroke="#4c5a66" stroke-width="1" stroke-dasharray="3 2" vector-effect="non-scaling-stroke" fill="none"/>
      <path d="M0 816H1965" stroke="#60707f" stroke-width="1" vector-effect="non-scaling-stroke"/>
      <path d="${dark}" stroke="#008a00" stroke-width="3"/>
      <path d="${bright}" stroke="#00c400" stroke-width="3"/>`;

    const levels = ["1.19950", "1.19475", "1.19005", "1.18535", "1.18065", "1.17595", "1.17125", "1.16655", "1.16185"];
    document.getElementById("prices").innerHTML = levels.map((p, i) =>
      `<span class="absolute left-0 flex -translate-y-1/2 items-center gap-[2px]" style="top:${(firstY + i * stepY) / 8.73}%"><i class="h-px w-[2px] bg-[#bbb]"></i>${p}</span>`
    ).join("") + `<span class="absolute left-px w-9 -translate-y-1/2 bg-white pl-[3px] text-black" style="top:${816 / 8.73}%">1.16295</span>`;

    const days = ["28 Aug 2020", "1 Sep 01:00", "3 Sep 01:00", "7 Sep 01:00", "9 Sep 01:00", "11 Sep 01:00", "15 Sep 01:00", "17 Sep 01:00", "21 Sep 01:00", "23 Sep 01:00", "25 Sep 01:00"];
    document.getElementById("times").innerHTML = days.map((d, i) =>
      `<span class="absolute top-0 whitespace-nowrap" style="left:${i * stepX * 2 / 19.65}%"><i class="block h-[2px] w-px bg-[#bbb]"></i>${d}</span>`
    ).join("");
  </script>
</body>
</html>
